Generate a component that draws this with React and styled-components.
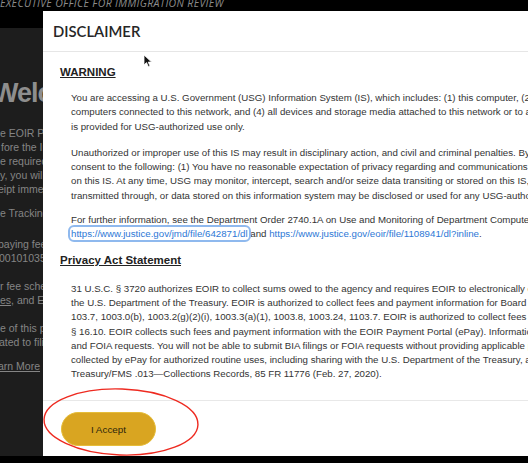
import React from 'react'
import styled, { createGlobalStyle } from 'styled-components'

const GlobalStyle = createGlobalStyle`
  html, body {
    margin: 0;
    padding: 0;
    background: #000;
  }
  body {
    font-family: "Liberation Sans", Arial, sans-serif;
  }
`;

const Screen = styled.div`
  position: relative;
  width: 528px;
  height: 463px;
  overflow: hidden;
  background: #000;
  display: flex;
  flex-direction: column;
`;

const TopBar = styled.div`
  height: 28px;
  flex-shrink: 0;
  background: #000;
  overflow: hidden;
`;

const Agency = styled.div`
  margin-top: -4px;
  font-family: "Open Sans", sans-serif;
  font-style: italic;
  font-size: 10.5px;
  line-height: 14px;
  letter-spacing: 0.35px;
  color: #8c8c8c;
  white-space: nowrap;
`;

const BackPage = styled.div`
  flex: 1;
  background: #1d1d1d;
  padding-top: 49px;
  display: flex;
  flex-direction: column;
  color: #858585;
  font-size: 10.5px;
  line-height: 14px;
  white-space: nowrap;
  overflow: hidden;
`;

const Welcome = styled.div`
  margin-left: -7px;
  font-size: 27px;
  font-weight: bold;
  letter-spacing: -1px;
  line-height: 32px;
  color: #8e8e8e;
  margin-bottom: 17px;
`;

const BackPara = styled.div`
  margin-top: ${p => p.gap || 0}px;
  margin-left: ${p => p.indent || 0}px;
`;

const BackLink = styled.span`
  text-decoration: underline;
`;

const BottomStrip = styled.div`
  height: 7px;
  flex-shrink: 0;
  background: #000;
`;

const Modal = styled.div`
  position: absolute;
  left: 43px;
  top: 11px;
  width: 620px;
  height: 445px;
  background: #fff;
  display: flex;
  flex-direction: column;
`;

const ModalHeader = styled.div`
  height: 41px;
  flex-shrink: 0;
  display: flex;
  align-items: center;
  padding-left: 10px;
  border-bottom: 1px solid #e6e6e6;
  box-sizing: border-box;
`;

const Title = styled.h1`
  margin: 0;
  font-family: Lato, "Open Sans", sans-serif;
  font-size: 14.8px;
  font-weight: 600;
  color: #262626;
`;

const ModalBody = styled.div`
  flex: 1;
  padding: 12px 0 0 17px;
  color: #333;
`;

const SectionTitle = styled.h2`
  margin: ${p => p.top || 0}px 0 ${p => p.bottom ?? 11}px 0;
  font-size: 11.5px;
  line-height: 16px;
  font-weight: bold;
  text-decoration: underline;
  color: #222;
`;

const Para = styled.p`
  margin: 0 0 ${p => p.bottom ?? 12}px 0;
  padding-left: 11px;
  font-size: 9.7px;
  line-height: 14.3px;
  white-space: nowrap;
`;

const Link = styled.a`
  color: #2d78d6;
  text-decoration: none;
  ${p => p.focused && `
    outline: 2px solid #8fb9ee;
    outline-offset: 1px;
    border-radius: 3px;
  `}
`;

const ModalFooter = styled.div`
  height: 56px;
  flex-shrink: 0;
  border-top: 1px solid #e8e8e8;
  box-sizing: border-box;
  padding: 11px 0 0 18px;
`;

const AcceptButton = styled.button`
  width: 95px;
  height: 34px;
  border-radius: 17px;
  border: 1px solid #e6bd3a;
  background: #d9a521;
  color: #2e250c;
  font-family: "Liberation Sans", Arial, sans-serif;
  font-size: 9.9px;
  cursor: pointer;
`;

const Annotation = styled.svg`
  position: absolute;
  left: 38px;
  top: 384px;
  pointer-events: none;
`;

const Cursor = styled.svg`
  position: absolute;
  left: 143px;
  top: 54px;
`;

export default function App() {
  return (
    <>
      <GlobalStyle />
      <Screen>
        <TopBar>
          <Agency>EXECUTIVE OFFICE FOR IMMIGRATION REVIEW</Agency>
        </TopBar>
        <BackPage>
          <Welcome>Welcome</Welcome>
          <BackPara>e EOIR Payment</BackPara>
          <BackPara indent={1}>fore the Immigration</BackPara>
          <BackPara>e required</BackPara>
          <BackPara>y, you will</BackPara>
          <BackPara indent={-2}>eipt immediately</BackPara>
          <BackPara gap={10}>e Tracking</BackPara>
          <BackPara gap={17} indent={-2}>paying fees</BackPara>
          <BackPara indent={-1}>00101035</BackPara>
          <BackPara gap={14}>r fee schedule</BackPara>
          <BackPara><BackLink>es</BackLink>, and EOIR</BackPara>
          <BackPara gap={14}>e of this page</BackPara>
          <BackPara indent={-1}>ated to filing</BackPara>
          <BackPara gap={10} indent={-2}><BackLink>arn More</BackLink></BackPara>
        </BackPage>
        <BottomStrip />

        <Modal>
          <ModalHeader>
            <Title>DISCLAIMER</Title>
          </ModalHeader>
          <ModalBody>
            <SectionTitle>WARNING</SectionTitle>
            <Para>
              You are accessing a U.S. Government (USG) Information System (IS), which includes: (1) this computer, (2) this computer network, (3) all<br />
              computers connected to this network, and (4) all devices and storage media attached to this network or to a computer on this network. This IS<br />
              is provided for USG-authorized use only.
            </Para>
            <Para bottom={10}>
              Unauthorized or improper use of this IS may result in disciplinary action, and civil and criminal penalties. By using this IS, you understand and<br />
              consent to the following: (1) You have no reasonable expectation of privacy regarding and communications or data transiting or stored<br />
              on this IS. At any time, USG may monitor, intercept, search and/or seize data transiting or stored on this IS, and any communications<br />
              transmitted through, or data stored on this information system may be disclosed or used for any USG-authorized purpose.
            </Para>
            <Para bottom={0}>
              For further information, see the Department Order 2740.1A on Use and Monitoring of Department Computers and Computer Systems at<br />
              <Link focused href="#">https://www.justice.gov/jmd/file/642871/dl</Link> and <Link href="#">https://www.justice.gov/eoir/file/1108941/dl?inline</Link>.
            </Para>
            <SectionTitle top={10} bottom={14}>Privacy Act Statement</SectionTitle>
            <Para bottom={0}>
              31 U.S.C. § 3720 authorizes EOIR to collect sums owed to the agency and requires EOIR to electronically collect these sums through<br />
              the U.S. Department of the Treasury. EOIR is authorized to collect fees and payment information for Board filings under 8 C.F.R.<br />
              103.7, 1003.0(b), 1003.2(g)(2)(i), 1003.3(a)(1), 1003.8, 1003.24, 1103.7. EOIR is authorized to collect fees and information for FOIA under 28 C.F.R.<br />
              § 16.10. EOIR collects such fees and payment information with the EOIR Payment Portal (ePay). Information is required for BIA filings<br />
              and FOIA requests. You will not be able to submit BIA filings or FOIA requests without providing applicable payment information. Information<br />
              collected by ePay for authorized routine uses, including sharing with the U.S. Department of the Treasury, as described in<br />
              Treasury/FMS .013—Collections Records, 85 FR 11776 (Feb. 27, 2020).
            </Para>
          </ModalBody>
          <ModalFooter>
            <AcceptButton>I Accept</AcceptButton>
          </ModalFooter>
        </Modal>

        <Annotation width="170" height="78" viewBox="0 0 170 78">
          <ellipse cx="83" cy="38" rx="77" ry="33" fill="none" stroke="#ee2a20" strokeWidth="1.4" transform="rotate(2 83 38)" />
        </Annotation>

        <Cursor width="10" height="14" viewBox="0 0 10 14">
          <path d="M1 1 L1 11 L3.5 8.6 L5.4 12.8 L7 12.1 L5.2 8.1 L8.6 8.1 Z" fill="#111" stroke="#fff" strokeWidth="0.8" />
        </Cursor>
      </Screen>
    </>
  )
}
